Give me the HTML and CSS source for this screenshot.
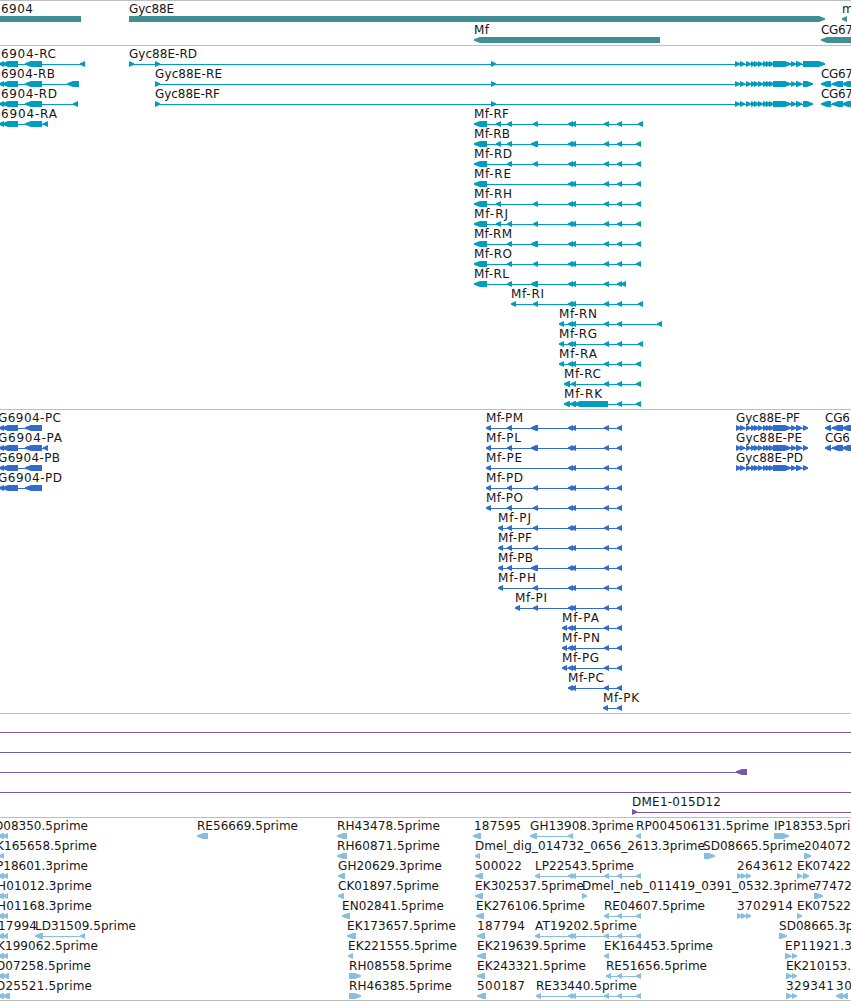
FILE: index.html
```html
<!DOCTYPE html>
<html lang="en">
<head>
<meta charset="utf-8">
<title>Genome browser – Gyc88E / Mf region</title>
<link rel="stylesheet" href="styles.css">
</head>
<body>
<main class="browser">
<section class="track genes" id="genes"></section>
<section class="track transcripts" id="transcripts"></section>
<section class="track proteins" id="proteins"></section>
<section class="track clones" id="clones"></section>
<section class="track ests" id="ests"></section>
</main>
<script src="tracks.js"></script>
</body>
</html>
```
FILE: styles.css
```css
body {
  margin: 0;
  background: #fff;
}
.browser {
  display: flex;
  flex-direction: column;
  width: 851px;
  height: 1000px;
  border-bottom: 1px solid #bebebe;
  overflow: hidden;
}
.track {
  box-sizing: border-box;
  border-top: 1px solid #bebebe;
  overflow: hidden;
}
.track svg {
  display: block;
  width: 851px;
  height: 100%;
}
.genes { height: 45px; color: #3f8f94; }
.transcripts { height: 364px; color: #009dbf; }
.proteins { height: 304px; color: #316ccd; }
.clones { height: 104px; color: #7458a7; }
.ests { height: 183px; color: #88bfdf; }
.label {
  font-family: "DejaVu Sans", sans-serif;
  font-size: 12px;
  fill: #161616;
}
.glyph {
  fill: currentColor;
}
```
FILE: tracks.js
```js
const NS = 'http://www.w3.org/2000/svg';

function node(name, attrs, parent) {
  const n = document.createElementNS(NS, name);
  for (const k in attrs) n.setAttribute(k, attrs[k]);
  parent.appendChild(n);
  return n;
}

// One exon: a 6px high box with an arrow head on its leading end.
function exon(a, b, y, dir) {
  if (dir === 'box') return `M${a} ${y}H${b}V${y + 6}H${a}Z`;
  const h = b - a > 7 ? 6 : Math.min(5, b - a);
  const s = dir === 'r' ? -1 : 1;
  const tip = dir === 'r' ? b : a;
  const tail = dir === 'r' ? a : b;
  return `M${tail} ${y}H${tip + s * h}L${tip} ${y + 2.2}V${y + 3.8}L${tip + s * h} ${y + 6}H${tail}Z`;
}

// Feature: [glyph top, label, label start, label end (0 = natural width), exons, direction]
function drawTrack(id, top, height, features) {
  const svg = node('svg', { viewBox: `0 ${top + 1} 851 ${height - 1}` }, document.getElementById(id));
  for (const [y, text, x, end, exons, dir] of features) {
    const from = exons[0][0] + 1;
    const to = exons[exons.length - 1][1] - 1;
    if (exons.length > 1 || dir === 'line') {
      node('rect', { class: 'glyph', x: from, y: y + 3, width: to - from, height: 1 }, svg);
    }
    if (dir !== 'line') {
      for (const [a, b] of exons) node('path', { class: 'glyph', d: exon(a, b, y, dir) }, svg);
    }
    if (text) {
      const attrs = { class: 'label', x, y: y - 3 };
      if (end) attrs.textLength = end - x;
      node('text', attrs, svg).textContent = text;
    }
  }
}

const A = [474, 487], B = [496, 501], C = [507, 512], D = [533, 538], D2 = [531, 538];
const E = [[568, 573], [571, 576]], F = [604, 609], G = [617, 622], H = [638, 643], H2 = [636, 641];

drawTrack('genes', 0, 45, [
  [16, '6904', 1, 33, [[-20, 81]], 'box'],
  [16, 'Gyc88E', 129, 174, [[129, 825]], 'r'],
  [16, 'm', 842, 0, [[842, 847]], 'l'],
  [37, 'Mf', 474, 489, [[474, 660]], 'l'],
  [37, 'CG67', 821, 853, [[821, 870]], 'l'],
]);

const left = [[-1, 4], [2, 18], [25, 42]];
const small = [740, 746, 751, 754, 758, 763, 766, 769].map(x => [x, x + 5]);
const core = [...small, [773, 791], [791, 796], [796, 802]];
const right = [[821, 831], [832, 843], [842, 870]];
const mf = [
  ['RF', 474, 509, [A, B, C, D, ...E, F, G, H]],
  ['RB', 474, 510, [A, B, C, D2, ...E, F, G, H2]],
  ['RD', 474, 512, [A, C, D, ...E, F, G, H2]],
  ['RE', 474, 511, [A, ...E, F, G, H2]],
  ['RH', 474, 512, [A, B, D, ...E, F, G, H2]],
  ['RJ', 474, 508, [A, B, C, D, ...E, F, G, H2]],
  ['RM', 474, 512, [A, C, D2, ...E, F, G, H2]],
  ['RO', 474, 512, [A, C, D, ...E, F, G, H2]],
  ['RL', 474, 509, [A, C, D2, ...E, F, G, [621, 626]]],
  ['RI', 511, 544, [[511, 516], D, ...E, F, G, H]],
  ['RN', 559, 597, [[559, 564], ...E, F, G, [657, 662]]],
  ['RG', 559, 597, [[559, 564], ...E, F, G, H]],
  ['RA', 559, 597, [[559, 564], ...E, F, G, H2]],
  ['RC', 564, 601, [[564, 570], [571, 576], F, G, H2]],
  ['RK', 564, 602, [[564, 570], [570, 576], [574, 608], G, H2]],
];
drawTrack('transcripts', 45, 364, [
  [61, '6904-RC', 1, 56, [...left, [80, 85]], 'l'],
  [81, '6904-RB', 1, 55, [...left, [67, 79]], 'l'],
  [101, '6904-RD', 1, 57, [...left, [73, 78]], 'l'],
  [121, '6904-RA', 1, 57, [...left, [43, 48]], 'l'],
  [61, 'Gyc88E-RD', 129, 197, [[129, 134], [155, 160], [491, 496], [735, 740], ...core, [803, 825]], 'r'],
  [81, 'Gyc88E-RE', 155, 222, [[155, 160], [491, 496], [735, 740], ...core, [803, 813]], 'r'],
  [101, 'Gyc88E-RF', 155, 220, [[155, 160], [491, 496], [735, 740], ...core, [803, 813]], 'r'],
  [81, 'CG67', 821, 853, right, 'l'],
  [101, 'CG67', 821, 853, right, 'l'],
  ...mf.map(([n, x, end, ex], i) => [121 + 20 * i, 'Mf-' + n, x, end, ex, 'l']),
]);

const P = [486, 491], Q = [498, 503], R = [562, 567];
const mfp = [
  ['PM', 486, 523, [P, C, D2, ...E, F, G]],
  ['PL', 486, 521, [P, C, D2, ...E, F, G]],
  ['PE', 486, 522, [P, ...E, F, G]],
  ['PD', 486, 523, [P, C, D, ...E, F, G]],
  ['PO', 486, 523, [P, C, D, ...E, F, G]],
  ['PJ', 498, 531, [Q, C, D, ...E, F, G]],
  ['PF', 498, 532, [Q, C, D, ...E, F, G]],
  ['PB', 498, 533, [Q, C, D2, ...E, F, G]],
  ['PH', 498, 536, [Q, D, ...E, F, G]],
  ['PI', 515, 547, [[515, 520], D, ...E, F, G]],
  ['PA', 562, 599, [R, ...E, F, G]],
  ['PN', 562, 600, [R, ...E, F, G]],
  ['PG', 562, 599, [R, ...E, F, G]],
  ['PC', 568, 604, [...E, F, G]],
  ['PK', 603, 639, [[603, 608], G]],
];
const gycP = [[736, 741], ...core, [803, 808]];
const rightP = [[825, 831], [832, 843], [842, 870]];
drawTrack('proteins', 409, 304, [
  [425, 'G6904-PC', -2, 61, left, 'l'],
  [445, 'G6904-PA', -2, 62, [...left, [43, 48]], 'l'],
  [465, 'G6904-PB', -2, 60, left, 'l'],
  [485, 'G6904-PD', -2, 62, left, 'l'],
  ...mfp.map(([n, x, end, ex], i) => [425 + 20 * i, 'Mf-' + n, x, end, ex, 'l']),
  [425, 'Gyc88E-PF', 736, 800, gycP, 'r'],
  [445, 'Gyc88E-PE', 736, 802, gycP, 'r'],
  [465, 'Gyc88E-PD', 736, 803, gycP, 'r'],
  [425, 'CG6', 825, 850, rightP, 'l'],
  [445, 'CG6', 825, 850, rightP, 'l'],
]);

drawTrack('clones', 713, 104, [
  [729, '', 0, 0, [[-20, 880]], 'line'],
  [749, '', 0, 0, [[-20, 880]], 'line'],
  [769, '', 0, 0, [[-20, -10], [736, 747]], 'l'],
  [789, '', 0, 0, [[-20, 880]], 'line'],
  [809, 'DME1-015D12', 632, 721, [[632, 637], [880, 890]], 'r'],
]);

const tail = [...E, F, G, H2];
const pair = [[-2, 4], [3, 8]];
const triple = [[737, 742], [741, 746], [746, 751]];
const est = [
  [
    ['D08350.5prime', -6, 88, pair], ['RE56669.5prime', 197, 298, [[197, 208]]],
    ['RH43478.5prime', 337, 440, [[337, 347]]], ['187595', 474, 521, [[473, 481]]],
    ['GH13908.3prime', 530, 634, [[530, 537], [568, 573]]],
    ['RP004506131.5prime', 636, 769, [[636, 641]]], ['IP18353.5prime', 774, 0, [[774, 789]], 'r'],
  ], [
    ['K165658.5prime', -4, 97, [[-1, 4]]], ['RH60871.5prime', 337, 440, [[337, 347]]],
    ['Dmel_dig_014732_0656_2613.3prime', 475, 705, [[475, 480]]],
    ['SD08665.5prime', 703, 805, [[704, 715]], 'r'], ['204072', 804, 851, [[804, 811]], 'r'],
  ], [
    ['P18601.3prime', -4, 88, pair], ['GH20629.3prime', 338, 442, [[338, 345]]],
    ['500022', 475, 522, [[475, 483]]], ['LP22543.5prime', 535, 634, [[535, 540], ...tail]],
    ['2643612', 737, 793, triple, 'r'], ['EK07422', 797, 851, [[797, 802], [803, 809]], 'r'],
  ], [
    ['H01012.3prime', -3, 92, pair], ['CK01897.5prime', 338, 439, [[338, 344]]],
    ['EK302537.5prime', 475, 584, [[475, 483]]],
    ['Dmel_neb_011419_0391_0532.3prime', 582, 816, [[582, 587]], 'r'],
    ['77472', 814, 852, [[814, 823]], 'r'],
  ], [
    ['H01168.3prime', -3, 92, pair], ['EN02841.5prime', 342, 444, [[342, 350]]],
    ['EK276106.5prime', 476, 585, [[476, 484]]], ['RE04607.5prime', 604, 705, [F, G, H2]],
    ['3702914', 737, 793, triple, 'r'], ['EK07522', 797, 851, [[797, 802]], 'r'],
  ], [
    ['17994', -2, 37, pair], ['LD31509.5prime', 35, 136, [[35, 43], [80, 85]]],
    ['EK173657.5prime', 347, 456, [[347, 356]]], ['187794', 477, 525, [[477, 485]]],
    ['AT19202.5prime', 535, 637, [[535, 540], ...tail]], ['SD08665.3prime', 779, 881, [[779, 787]], 'r'],
  ], [
    ['K199062.5prime', -3, 98, pair], ['EK221555.5prime', 348, 457, [[348, 353]]],
    ['EK219639.5prime', 477, 586, [[477, 486]]], ['EK164453.5prime', 604, 713, [F]],
    ['EP11921.3', 785, 852, [[785, 791], [792, 797]], 'r'],
  ], [
    ['D07258.5prime', -4, 91, [[-2, 4], [3, 9]]], ['RH08558.5prime', 349, 452, [[349, 361]], 'r'],
    ['EK243321.5prime', 477, 586, [[477, 485]]], ['RE51656.5prime', 606, 707, [[606, 611], G, H2]],
    ['EK210153.', 786, 851, [[786, 792], [792, 797]], 'r'],
  ], [
    ['D25521.5prime', -4, 92, [[-2, 4], [3, 10]]], ['RH46385.5prime', 349, 452, [[349, 361]], 'r'],
    ['500187', 477, 525, [[477, 486]]], ['RE33440.5prime', 536, 637, [[536, 541], ...tail]],
    ['329341', 786, 834, [[786, 792], [792, 797]], 'r'], ['30', 836, 852, [[836, 843], [842, 848]]],
  ],
];
drawTrack('ests', 817, 183, est.flatMap((row, i) =>
  row.map(([n, x, end, ex, dir]) => [833 + 20 * i, n, x, end, ex, dir || 'l'])));
```
